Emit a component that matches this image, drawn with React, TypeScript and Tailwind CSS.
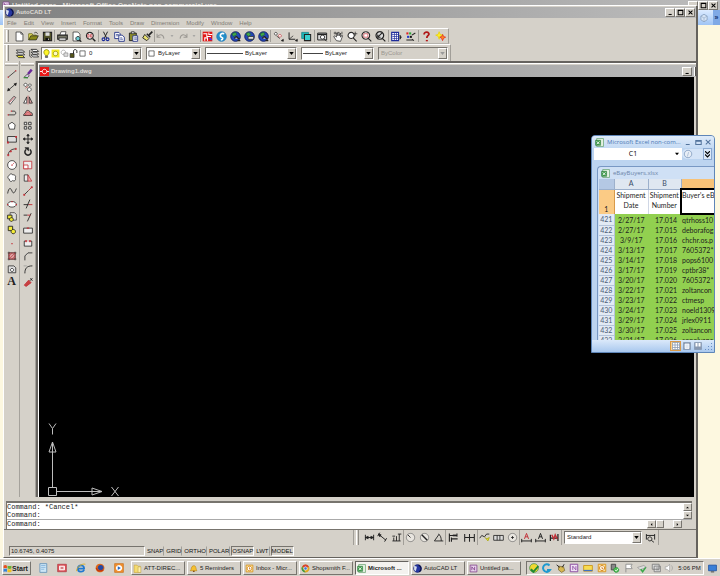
import React from "react";

type Stroke = [d: string, stroke?: string, fill?: string, width?: number];

const K = "#222222";
const R = "#c23038";
const N = "none";
const SHEET: Stroke = ["M3 1.5h7l3 3v10H3z", K, "#fff"];

/* Each glyph is a list of [path, stroke, fill, stroke width] on a 16 x 16 grid. */
const GLYPHS: Record<string, Stroke[]> = {
  new: [SHEET, ["M10 1.5v3h3", K]],
  open: [["M1 13V4h5l1 2h5v2", "#555500", "#e8e060"], ["M1 13l3-6h11l-3 6z", K, "#8a8a1a"], ["M9 3c2-2 4-1 5 1", K]],
  save: [["M2 2h12v12H2z", K, "#55552a", 1.5], ["M5 2h6v5H5z", N, "#ddd"], ["M5 10h6v4H5z", N, "#111"], ["M9 11h1v2H9z", N, "#fff"]],
  print: [["M4 6l2-5h7l-1 5", K, "#fff"], ["M1 6h14v6H1z", K, "#777766", 1.5], ["M3 10h10v4H3z", K, "#ccc"]],
  preview: [SHEET, ["M10 8a3 3 0 1 0 .1 0", K, "#6fd0d8", 1.3], ["M12 13l3 2.5", K, N, 2]],
  find: [["M7 2a5 5 0 1 0 .1 0", K, "#fff", 1.5], ["M11 11l4 4", K, N, 2], ["M4 5h2v4H4zM8 5h2v4H8z", R, N]],
  cut: [["M5 1l5 10M11 1L6 11", K, N, 1.4], ["M5 10a2 2 0 1 0 .1 0M11 10a2 2 0 1 0 .1 0", "#1a2a99", N, 1.6]],
  copy: [["M1 2h6l2 2v7H1z", "#223388", "#fff", 1.3], ["M7 6h5l3 3v6H7z", "#223388", "#fff", 1.3], ["M3 5h4M3 7h4M9 10h3M9 12h4", "#223388"]],
  paste: [["M2 3h10v11H2z", K, "#8a8a2a", 1.4], ["M5 1h4v3H5z", K, "#ddd"], ["M7 7h7v8H7z", "#223388", "#fff", 1.2], ["M9 10h4M9 12h4", "#223388"]],
  brush: [["M15 1l-5 5", K, N, 2.5], ["M4 5l6 6-3 3-6-4z", K, "#e8e070", 1.3], ["M7 4l5 5", K, "#fff", 2]],
  undo: [["M3 4v5h5M3 9c3-5 9-5 10 2", "#9b9893", N, 1.5]],
  redo: [["M13 4v5H8M13 9C10 4 4 4 3 11", "#9b9893", N, 1.5]],
  dot: [["M6 7h4l-2 2z", "#999", "#999"]],
  today: [["M1 1h14v14H1z", N, "#e01818"], ["M2 4h5v4h6M4 14v-4h4v4M10 2v3h5", "#fff", N, 1.5], ["M11 10l3 3", "#3a3aff", N, 2]],
  msn: [["M8 1a7 7 0 1 0 .1 0", "#1d75b8", "#238fc9"], ["M12 4C6 2 5 8 8 9c3 1 2 4-1 4", "#fff", N, 2.4]],
  globe: [["M8 1a7 7 0 1 0 .1 0", "#14205e", "#2346b8", 1.3], ["M3 4l4-2 3 3-4 3zM9 9l4-1-2 5z", "#1d6b2a", "#45a84a"], ["M6 8h8v4H6z", K, "#ddd"]],
  globe2: [["M8 1a7 7 0 1 0 .1 0", "#14205e", "#2346b8", 1.3], ["M3 4l5-2 2 3-5 3z", "#1d6b2a", "#45a84a"], ["M7 11a2 2 0 0 1 4-1l3 2M11 14h4", K, "#ccc", 2]],
  snap: [["M4 2a2 2 0 1 0 .1 0", K, "#fff"], ["M10 5a2 2 0 1 0 .1 0", R, "#fff"], ["M5 7l5 4M12 14l3 1v-3z", K, K]],
  ucs: [["M3 2v10h9", K, N, 1.4], ["M3 12l6-5M12 14l3 1v-3z", K, K]],
  block: [["M1 2h10v9H1z", "#157a80", "#1fb5b8"], ["M5 5h9v9H5z", K, "#39cfcf", 1.5]],
  aerial: [["M1 3h13v10H1z", K, "#ddd", 1.4], ["M1 5h13", K, N, 2], ["M8 6a3 3 0 1 0 .1 0M10 11l4 4", K, "#fff", 1.4]],
  pan: [["M5 14L1 8l2-1 2 2V3h2v4-5h2v5l2-4v6l2-3 1 1-3 8z", K, "#fff"], ["M1 3h4M3 1v4M13 1v4", K]],
  zoomrt: [["M6 2a4.5 4.5 0 1 0 .1 0M9 10l5 5", K, "#fff", 1.5], ["M12 1v6M10 4h5", K]],
  zoomwin: [["M7 1a5.5 5.5 0 1 0 .1 0M11 11l4 4", K, "#fff", 1.5], ["M4 4h6v5H4z", R]],
  zoomprev: [["M7 1a5.5 5.5 0 1 0 .1 0M11 11l4 4", K, "#ddd", 1.7], ["M10 3L4 9M4 5v4h4", K, N, 1.6]],
  props: [["M1 2h10v12H1z", "#1f2c9a", "#fff", 1.6], ["M1 5h10M5 2v12M8 2v12M2 8h8M2 11h8", "#1f2c9a"], ["M13 6l2 3-2 3z", K, K]],
  dbs: [["M2 2h3v3H2z", N, "#e02020"], ["M6 2h3v3H6z", N, "#2aa838"], ["M3 7h3v3H3z", N, "#2438c8"], ["M7 7h3v3H7z", N, "#111"], ["M2 13h9M10 6l5-3M10 12l3 2", K, N, 1.5]],
  help: [["M4.5 5c0-5 8-4 7 0-1 2-3 2-3 5", "#b01818", N, 2.6], ["M7 13h3v2H7z", N, "#b01818"]],
  star: [["M6 1l1.5 4L12 6 7.5 7.500 6 12 4.500 7.500 1 6l3.500-1z", "#e8d000", "#fff02a"], ["M11 5l1.500 3 3 1-3 1.500L11 14l-1.500-3.500L7 9l3-1z", "#e02020", "#ff8a20"]],
  layers: [["M2 3h9l3 3H5z", K, "#fff", 1.2], ["M2 7h9l3 3H5z", K, "#fff", 1.2], ["M2 11h9l3 3H5z", K, "#f2ea36", 1.2]],
  layers2: [["M3 2h8l3 3H6zM3 6h8l3 3H6zM3 10h8l3 3H6z", K, "#fff", 1.2], ["M1 3v9l3 2", K]],
  bulb: [["M8 1a5 5 0 0 1 2 9.500v1H6v-1A5 5 0 0 1 8 1z", "#7a7a00", "#fff62a", 1.2], ["M6 13h4v2H6z", K, "#999"]],
  sun: [["M1 1h14v14H1z", N, "#f2ea20"], ["M8 4a4 4 0 1 0 .1 0", "#7a7a00", "#fffcc0", 1.2]],
  vp: [["M6 2a4 4 0 1 0 .1 0", "#888", "#fff"], ["M7 7h7v6H7z", "#777", "#ddd"]],
  lock: [["M2 8h7v7H2z", K, "#55551a", 1.2], ["M8 8V4c0-4 6-4 6 0v3", K, N, 1.7]],
  square: [["M2 2h12v12H2z", K, "#fff", 1.4]],
  line: [["M2 13L14 3", K, N, 1.2], ["M1 12h2v2H1zM13 2h2v2h-2z", N, R]],
  xline: [["M1 14L15 2", K, N, 1.3], ["M1 14l1-4 3 3zM15 2l-1 4-3-3z", K, K]],
  mline: [["M2 12L11 2l3 2-9 11z", K, "#eee", 1.1], ["M3 13L12 3", R]],
  pline: [["M2 11h9c4 0 4-6 0-6H8", K, N, 1.3], ["M1 10h2v2H1zM6 4h2v2H6z", N, R]],
  polygon: [["M8 2l5 4-1 7H4L2 6z", K, "#fff", 1.2]],
  rect: [["M1 4h14v9H1z", K, "#ddd", 1.3], ["M0 12h3v3H0zM13 3h3v3h-3z", N, R]],
  arc: [["M2 13C2 6 8 3 14 3", K, N, 1.3], ["M1 12h2v2H1zM5 6h2v2H5zM13 2h2v2h-2z", R, R]],
  circle: [["M8 1a7 7 0 1 0 .1 0", K, "#fff", 1.2], ["M7 7h2v2H7z", N, R], ["M9 7l3-3", R]],
  cloud: [["M4 3c2-3 5-1 5 0 4-1 6 3 4 5 2 3-1 6-4 4-2 3-6 1-5-2-4-1-3-5 0-7z", K, "#fff", 1.2]],
  spline: [["M1 12C3 1 6 3 8 8s4 4 7-4", K, N, 1.3]],
  ellipse: [["M8 4c9 0 9 9 0 9s-9-9 0-9z", K, "#fff", 1.2], ["M0 8h2v2H0zM14 8h2v2h-2zM7 3h2v2H7z", N, R]],
  insert: [["M5 1h7l3 3v9H5z", K, "#ddd"], ["M1 5h7v6H1z", K, "#f2ea36", 1.4], ["M7 9a3 3 0 1 0 .1 0", K, "#f2ea36", 1.4]],
  mkblock: [["M2 2h7v7H2z", K, "#f2ea36", 1.4], ["M10 7a3.500 3.500 0 1 0 .1 0", K, "#f2ea36", 1.4]],
  point: [["M7 8h2v2H7z", N, R]],
  hatch: [["M3 3h10v10H3z", R, "#d9a0a0", 1.2], ["M1 3h14M1 13h14M3 1v14M13 1v14", K], ["M3 8l5-5M3 13L13 3M8 13l5-5", R]],
  region: [["M2 3h9l3 3v8H2z", K, "#ddd", 1.2], ["M8 7a2.500 2.500 0 1 0 .1 0", K, "#fff", 1.2]],
  erase: [["M14 1L8 8", "#6a2a9a", N, 4], ["M7 8l3 3-3 3-5-1z", K, "#d8c8e8"], ["M1 14h7", "#2a8a2a", N, 1.800]],
  copyobj: [["M4 2a2.500 2.500 0 1 0 .1 0M11 3a2 2 0 1 0 .1 0M10 9a3 3 0 1 0 .1 0", K, "#fff", 1.1], ["M4 10l4-3", R]],
  mirror: [["M6 3v10H1z", K, "#fff", 1.2], ["M10 3v10h5z", K, "#d9a0a0", 1.2], ["M8 1v14", R]],
  offset: [["M1 12c0-4 3-3 3-5s4-6 8 0c2 0 3 1 3 5z", K, "#d98a8a", 1.2], ["M4 11c0-3 2-3 4-3s4 0 4 3z", R, "#eab0b0"]],
  array: [["M2 2h4v4H2zM9 2h4v4H9zM2 9h4v4H2zM9 9h4v4H9z", K, "#eee", 1.3]],
  move: [["M8 1v14M1 8h14", K, N, 1.5], ["M8 0l2 3H6zM8 16l2-3H6zM0 8l3-2v4zM16 8l-3-2v4z", K, K]],
  rotate: [["M11 4a5 5 0 1 1-6 0", K, N, 2.4], ["M3 1h6v5z", K, K]],
  scale: [["M1 2h13v12H1z", R, "#eee", 1.3], ["M1 8h7v6H1z", R, "#fff", 1.3]],
  stretch: [["M2 3h6v10H2z", K, "#eee", 1.2], ["M8 3l6 10H8z", R, "#eab0b0", 1.2]],
  lengthen: [["M2 14L9 7", K, N, 1.3], ["M9 7l5-5", R, N, 1.500], ["M1 13h2v2H1zM13 1h2v2h-2z", R, R]],
  trim: [["M11 1L5 15M1 9h8", K, N, 1.4], ["M9 9h6", R, N, 1.500]],
  extend: [["M13 2L7 15", K, N, 1.4], ["M1 5h6", K, N, 1.4], ["M7 5h5", R, N, 1.500]],
  brk: [["M1 5h14v8H1z", K, "#eee", 1.3], ["M6 5h4", R, N, 2]],
  brk2: [["M4 5H2v8h12V5h-2", K, "#eee", 1.3], ["M4 4h2v2H4zM10 4h2v2h-2z", R, R]],
  chamfer: [["M3 15V8l5-5h7", K, N, 1.3], ["M3 8l5-5", "#666", N, 1.300]],
  fillet: [["M3 15C3 7 6 3 15 3", K, N, 1.4], ["M1 3h5", "#888"]],
  explode: [["M2 13l7-8 4 4-8 6z", R, "#c84040", 1.300], ["M11 6l4-4M12 2l3 4", K, N, 1.5]],
  dlin: [["M2 4v8M14 4v8M2 8h12", K, N, 1.4], ["M2 8l4-2v4zM14 8l-4-2v4z", K, K]],
  dali: [["M2 3l11 9M1 6l3-5M11 14l3-5", K, N, 1.4], ["M2 3l4 1-2 3z", K, K]],
  dord: [["M2 13h12M4 13V8M8 13V6M12 13V3M2 6h4M10 3h5", K, N, 1.3]],
  drad: [["M8 2a6 6 0 1 0 .1 0", "#666", "#e8e5df"], ["M8 8L4 4", K, N, 1.3]],
  ddia: [["M8 2a6 6 0 1 0 .1 0", "#666", "#e8e5df"], ["M4 4l8 8", K, N, 2]],
  dang: [["M2 13h13M2 13L9 3", K, N, 1.3], ["M8 3c3 2 4 5 4 10", K, N, 1.3]],
  qdim: [["M2 2v12M13 2v5M2 5h11M5 10h9M5 8v6", K, N, 1.6], ["M7 5h5", K, N, 2.5]],
  dcont: [["M1 3v11M8 3v11M15 3v11M1 8h14", K, N, 1.5]],
  leader: [["M1 9l3-4 4 2 3-4h4", K, N, 1.3], ["M9 8l2 2 4-2-2 5z", "#a0a000", "#f2ea36"]],
  tol: [["M1 5h14v7H1zM6 5v7M10 5v7", K, "#ddd", 1.2]],
  center: [["M8 2a6 6 0 1 0 .1 0", "#666", "#e8e5df"], ["M8 6v4M6 8h4", K, N, 1.300]],
  dimedit: [["M5 10l3-8 3 8M6 7h4", R, N, 1.4], ["M1 13h14M1 10v5M15 10v5", K, N, 1.4]],
  dimtedit: [["M5 10l3-8 3 8M6 7h4", K, N, 1.4], ["M1 13h14M1 10v5M15 10v5", K, N, 1.4]],
  dimupd: [["M2 4v9M13 3v10M2 9h11", K, N, 1.8], ["M4 4l3 6 2-6 3 6", R, N, 2]],
  dimstyle: [["M2 3v8M14 3v8M2 5h12", K, N, 1.4], ["M7 7a3 3 0 1 0 .1 0M9 12l4 3", K, N, 1.3]],
  acad: [["M8 1a7 7 0 1 0 .1 0", "#1a2270", "#2636a0"], ["M2 3l5 2-2 8-3-3z", N, "#d8e0f0"], ["M10 2c5 2 6 9 1 12", "#0a1144", N, 2]],
  dwg: [["M0 0h16v16H0z", N, "#e81818"], ["M8 4a4 4 0 1 0 .1 0M0 8h4M12 8h4", "#fff", N, 1.600]],
  excel: [["M3 1h12v14H3z", "#3c8a48", "#eaf5e8"], ["M1 4h9v9H1z", "#2c7a3a", "#3d9a4a"], ["M3 6l5 5M8 6l-5 5", "#fff", N, 1.6]],
  onenote: [["M2 2h12v12H2z", "#80408a", "#ead6ee", 1.4], ["M5 11V5l5 6V5", "#80408a", N, 1.500]],
  chrome: [["M8 1a7 7 0 1 0 .1 0", N, "#e0a820"], ["M8 1A7 7 0 0 1 14 5L8 8 2 4.500A7 7 0 0 1 8 1z", N, "#d84030"], ["M2 4.500L8 15A7 7 0 0 1 2 4.500z", N, "#3a9a48"], ["M8 5a3 3 0 1 0 .1 0", "#fff", "#3a78d8", 1.3]],
  outlook: [["M2 2h12v12H2z", "#d89018", "#fbe29a", 1.4], ["M8 4a4 4 0 1 0 .1 0M8 6v3h2", "#d07808", "#fff", 1.4]],
  folder: [["M2 2h5l2 2h4v11H2z", "#c8a030", "#f5dc70"], ["M9 5h5v10H9z", "#b8a050", "#fff0a8"]],
  bell: [["M2 12c3-2 1-8 6-9s4 6 6 9z", "#b88010", "#f5c030"], ["M7 13h3", "#804000", N, 2]],
  note: [["M3 1h11v14H3z", "#6090b8", "#cde6f6", 1.3], ["M5 4h7M5 7h7M5 10h5", "#6aa0d0"]],
  key: [["M1 2h14v12H1z", "#a83038", "#e05058"], ["M4 5h8v6H4z", "#fff", "#f8d0d0", 1.3], ["M6 8h4", "#a83038", N, 1.6]],
  ie: [["M3 9h10c0-7-10-7-10 0 0 6 8 6 10 2", "#2078d0", N, 2.8], ["M1 13C0 8 9 0 15 2", "#e0b020", N, 1.5]],
  firefox: [["M8 1a7 7 0 1 0 .1 0", N, "#e06818"], ["M9 3a4.500 4.500 0 1 0 .1 0", N, "#2848a0"], ["M2 8c2 6 8 5 11 3", "#c03810", N, 2]],
  wmp: [["M1 1h14v14H1z", "#c86810", "#f09030"], ["M8 3a5 5 0 1 0 .1 0", N, "#fff"], ["M6 5l5 3-5 3z", N, "#2868c0"]],
  flag: [["M1 3c3-2 4-1 6 0v5c-2-1-4-1-6 0z", N, "#e85020"], ["M8 3c3 1 4 1 7 0v5c-3 1-4 1-7 0z", N, "#68b030"], ["M1 9c3-1 4-1 6 0v5c-2-1-4-1-6 0z", N, "#3080d8"], ["M8 9c3 1 4 1 7 0v5c-3 1-4 1-7 0z", N, "#f0c020"]],
  tcheck: [["M8 1a7 7 0 1 0 .1 0", "#288838", "#f0d830"], ["M3 10l4 4 8-9", "#1d8a34", N, 3]],
  tsync: [["M12 4a6 6 0 1 0 1 7H8", "#1e9ad0", N, 3.2]],
  tbug: [["M4 5l8 1 2 6-5 3-5-4z", "#6a5828", "#d8b850"], ["M1 3l5 4M13 2l-3 5", K, N, 1.500]],
  tnote: [["M2 2h12v12H2z", "#8a4aa0", "#efe0f4", 1.5], ["M6 11V5l5 6V5", "#8a4aa0", N, 1.300]],
  tmail: [["M1 4h14v9H1z", "#c89010", "#f8dc50", 1.3], ["M1 12h14", "#4070c0", N, 2]],
  tplug: [["M2 2h7v9H2z", "#444", "#888", 1.4], ["M10 7a4 4 0 1 0 .1 0", "#1d8a34", "#4cc050"], ["M8 11l2 2 3-4", "#fff", N, 1.300]],
  tflag: [["M3 15V2h10l-2 3 2 4H3", "#888", "#fff", 1.3]],
  tusb: [["M1 7l10-3 4 3-10 4z", "#888", "#ddd"], ["M6 10l3 4 5-7", "#38a848", N, 2.4]],
  tnet: [["M2 2h11v8H2zM5 5h10v9H5z", "#777", "#ddd", 1.3], ["M8 8h5M8 11h5", "#777"]],
  tvol: [["M2 6h3l4-4v12l-4-4H2z", "#999", "#fff"], ["M12 4c2 3 2 5 0 8", "#999"]],
  desk: [["M1 2h14v10H1z", "#1d50a0", "#3a80d8", 1.400], ["M5 14h6", "#555", N, 2]],
  fx: [["M8 2a6 6 0 1 0 .1 0", "#8fa8c8", "#e8eef6", 1.5], ["M9 5L7 12", "#8fa8c8"]],
  pagen: [["M1 1h14v14H1z", "#8898b0", "#fff", 1.5], ["M1 6h14M1 11h14M6 1v14M11 1v14", "#8898b0", N, 1.500]],
  pagel: [["M1 1h14v14H1z", "#7486a0", "#8898b0"], ["M4 4h8v9H4z", "#fff", "#dfe8f4", 1.5]],
  pageb: [["M1 1h14v14H1z", "#7486a0", "#8898b0"], ["M3 2h4v7H3zM9 2h4v7H9z", N, "#fff"]],
  cube: [["M3 5l5-3 5 3v6l-5 3-5-3z", "#8fa6c4", "#d6e4f6", 1.500], ["M3 5l5 3 5-3M8 8v6", "#8fa6c4"]],
};

function Glyph({ name, className = "size-3" }: { name: string; className?: string }) {
  return (
    <svg viewBox="0 0 16 16" className={`${className} shrink-0`} aria-hidden="true">
      {(GLYPHS[name] ?? []).map(([d, stroke = K, fill = N, width = 1], i) => (
        <path key={i} d={d} stroke={stroke} fill={fill} strokeWidth={width} />
      ))}
    </svg>
  );
}

const RAISED = "border border-t-white border-l-white border-r-[#77746e] border-b-[#77746e] bg-[#d5d1c9]";
const SUNKEN = "border border-t-[#77746e] border-l-[#77746e] border-r-white border-b-white";

function Tool({ name }: { name: string }) {
  return (
    <button type="button" aria-label={name} className="flex min-w-0 flex-1 items-center justify-center">
      <Glyph name={name} className={name === "dot" ? "size-2" : "size-[11px]"} />
    </button>
  );
}

function Group({ items, width }: { items: string[]; width: string }) {
  return (
    <div className={`${width} flex shrink-0 border-r border-[#a19e98]`}>
      {items.map((n, i) => <Tool key={i} name={n} />)}
    </div>
  );
}

function Grip() {
  return <div className="mr-1 w-[3px] shrink-0 self-stretch border-x border-t-0 border-l-white border-r-[#8d8a84]" />;
}

function WinButtons({ small = false }: { small?: boolean }) {
  const labels = small ? ["Minimize"] : ["Minimize", "Maximize", "Close"];
  const paths = ["M2 7h4", "M1.500 1.500h6v6h-6zM1 2h7", "M2 2l5 5M7 2L2 7"];
  return (
    <div className="flex shrink-0">
      {labels.map((l, i) => (
        <button key={l} type="button" aria-label={l} className={`${RAISED} flex h-[9px] w-[10px] items-center justify-center`}>
          <svg viewBox="0 0 9 9" className="size-[7px]"><path d={paths[i]} stroke="#000" strokeWidth="1.300" fill="none" /></svg>
        </button>
      ))}
    </div>
  );
}

function Combo({ label, value, width, icons = [], rule = "", disabled = false }: {
  label: string; value: string; width: string; icons?: string[]; rule?: string; disabled?: boolean;
}) {
  return (
    <div className={`${SUNKEN} ${width} flex h-[13px] shrink-0 items-center ${disabled ? "bg-[#d5d1c9] text-[#99958f]" : "bg-white text-[#222]"}`}>
      {icons.map((n) => <Glyph key={n} name={n} className={n === "square" ? "mx-px size-[7px]" : "size-[9px]"} />)}
      {rule && <span className={`${rule} ml-px h-px shrink-0 bg-[#444]`} />}
      <select aria-label={label} disabled={disabled} className="min-w-0 flex-1 appearance-none bg-transparent pl-[2px] leading-[9px] opacity-100">
        <option>{value}</option>
      </select>
      <span className={`${RAISED} pointer-events-none flex h-[11px] w-[9px] items-center justify-center`}>
        <svg viewBox="0 0 6 4" className="h-[3px] w-[5px]"><path d="M0 0h6L3 4z" fill={disabled ? "#999" : "#000"} /></svg>
      </span>
    </div>
  );
}

const MENUS = ["File", "Edit", "View", "Insert", "Format", "Tools", "Draw", "Dimension", "Modify", "Window", "Help"];
const DRAW = ["line", "xline", "mline", "pline", "polygon", "rect", "arc", "circle", "cloud", "spline", "ellipse", "insert", "mkblock", "point", "hatch", "region"];
const MODIFY = ["erase", "copyobj", "mirror", "offset", "array", "move", "rotate", "scale", "stretch", "lengthen", "trim", "extend", "brk", "brk2", "chamfer", "fillet", "explode"];

function SideBar({ items, text = false }: { items: string[]; text?: boolean }) {
  return (
    <div className="flex w-4 flex-col border-r border-[#a5a29c]">
      <div className="mx-px mt-[2px] mb-px h-[3px] border-y border-t-white border-b-[#a19e98]" />
      {items.map((n) => (
        <button key={n} type="button" aria-label={n} className="flex h-[13px] items-center justify-center"><Glyph name={n} className="size-[10px]" /></button>
      ))}
      {text && <button type="button" className="h-[13px] font-['Liberation_Serif',serif] text-[12px] leading-[13px] font-bold">A</button>}
    </div>
  );
}

function StandardBar() {
  return (
    <div className="flex h-4 w-[445px] border-r border-b border-r-[#a19e98] border-b-[#b5b2ac] border-t border-t-white py-px pl-[2px]">
      <Grip />
      <Group width="w-[42px]" items={["new", "open", "save"]} />
      <Group width="w-[44px]" items={["print", "preview", "find"]} />
      <Group width="w-[56px]" items={["cut", "copy", "paste", "brush"]} />
      <Group width="w-[46px]" items={["undo", "dot", "redo", "dot"]} />
      <Group width="w-[70px]" items={["today", "msn", "globe2", "globe", "globe2"]} />
      <Group width="w-[44px]" items={["snap", "ucs", "block"]} />
      <Group width="w-[16px]" items={["aerial"]} />
      <Group width="w-[58px]" items={["pan", "zoomrt", "zoomwin", "zoomprev"]} />
      <Group width="w-[30px]" items={["props", "dbs"]} />
      <div className="flex flex-1"><Tool name="help" /><Tool name="star" /></div>
    </div>
  );
}

function PropertiesBar() {
  return (
    <div className="flex h-[17px] w-[447px] items-center border-t border-r border-t-white border-r-[#a19e98] pl-[2px]">
      <Grip />
      <div className="flex w-[28px]"><Tool name="layers" /><Tool name="layers2" /></div>
      <div className="flex gap-1">
        <Combo label="Layer" value="0" width="w-[101px]" icons={["bulb", "sun", "vp", "lock", "square"]} />
        <Combo label="Color" value="ByLayer" width="w-[55px]" icons={["square"]} />
        <Combo label="Linetype" value="ByLayer" width="w-[92px]" rule="w-[36px]" />
        <Combo label="Lineweight" value="ByLayer" width="w-[73px]" rule="w-[20px]" />
        <Combo label="Plot style" value="ByColor" width="w-[70px]" disabled />
      </div>
    </div>
  );
}

function DrawingArea() {
  return (
    <div className="flex min-w-0 flex-1 flex-col border-t-2 border-l-2 border-[#66635f]">
      <div className="flex min-h-0 flex-1 flex-col border-t border-l border-white pt-px">
        <div className="flex h-3 items-center gap-[2px] bg-linear-to-r from-[#818181] to-[#bcbcbc] pl-px">
          <Glyph name="dwg" className="size-[9px]" />
          <h2 className="flex-1 text-[6px] leading-3 font-bold text-[#dedbd5]">Drawing1.dwg</h2>
          <WinButtons small />
          <span className="h-[9px] w-[2px] border-l border-white bg-[#55534f]" />
        </div>
        <div className="mr-[2px] flex min-h-0 flex-1 items-end bg-black">
          <svg viewBox="0 0 90 80" className="h-[80px] w-[90px]" fill="none" stroke="#bdbdbd">
            <path d="M9.500 70.500h8v8h-8zM13.500 70V25M18 74.500h45" />
            <path d="M13.500 25l-3.500 10h7zM13.500 27v8M63 74.500l-10-3.500v7zM53 74.500h10" />
            <path d="M10 6.500l3.500 5 3.500-5M13.500 11.500v6M72.500 70l7 9M79.500 70l-7 9" />
          </svg>
        </div>
      </div>
    </div>
  );
}

function Arrow({ d, label }: { d: string; label: string }) {
  return (
    <button type="button" aria-label={label} className={`${RAISED} flex h-2 w-[9px] items-center justify-center`}>
      <svg viewBox="0 0 4 4" className="size-[3px]"><path d={d} /></svg>
    </button>
  );
}

function CommandPanel() {
  return (
    <div className="mt-1 mr-[4px] ml-[2px] border-t-2 border-l border-[#77746e] font-['Liberation_Mono',monospace] text-[7px]">
      <div className="flex border-b border-[#aaa] bg-white">
        <pre className="flex-1 font-['Liberation_Mono',monospace] leading-[8px]">{"Command: *Cancel*\nCommand:"}</pre>
        <div><Arrow d="M0 3h4L2 1z" label="Scroll up" /><Arrow d="M0 1h4L2 3z" label="Scroll down" /></div>
      </div>
      <div className="flex h-[9px] bg-[#d5d1c9]">
        <label htmlFor="command" className="bg-white leading-[9px]">Command:</label>
        <input id="command" className="min-w-0 flex-1 bg-white leading-[9px] outline-none" />
        <div className="flex w-[45px]">
          <Arrow d="M3 0v4L1 2z" label="Scroll left" />
          <span className={`${RAISED} h-2 w-[8px]`} />
          <span className="h-2 w-[9px] bg-[#e8e5e0]" />
          <Arrow d="M1 0v4l2-2z" label="Scroll right" />
        </div>
      </div>
    </div>
  );
}

function DimensionBar() {
  return (
    <div className="flex h-4 border-t border-[#77746e]">
      <div className="mr-[2px] w-[350px] border-r border-[#a19e98]" />
      <Grip />
      <Group width="w-[41px]" items={["dlin", "dali", "dord"]} />
      <Group width="w-[42px]" items={["drad", "ddia", "dang"]} />
      <Group width="w-[32px]" items={["qdim", "dcont"]} />
      <Group width="w-[42px]" items={["leader", "tol", "center"]} />
      <Group width="w-[42px]" items={["dimedit", "dimtedit", "dimupd"]} />
      <div className="ml-[2px] flex items-center"><Combo label="Dimension style" value="Standard" width="w-[78px]" /></div>
      <div className="flex w-[17px] border-r border-[#a19e98]"><Tool name="dimstyle" /></div>
    </div>
  );
}

const MODES: [string, boolean][] = [["SNAP", false], ["GRID", false], ["ORTHO", false], ["POLAR", false], ["OSNAP", true], ["LWT", false], ["MODEL", true]];

function AutoCad() {
  return (
    <main className="absolute top-[5px] right-[22px] bottom-0 left-[3px] flex flex-col border-t border-r-2 border-b border-l border-t-white border-r-[#65625d] border-b-[#65625d] border-l-white bg-[#d5d1c9] pt-px">
      <header className="ml-px flex h-[11px] shrink-0 items-center gap-[2px] bg-linear-to-r from-[#818181] to-[#bcbcbc] pr-px">
        <Glyph name="acad" className="size-[9px]" />
        <h1 className="flex-1 font-bold text-[#dedbd5]">AutoCAD LT</h1>
        <WinButtons />
      </header>
      <nav className="flex h-[10px] shrink-0 items-center gap-[7px] pl-[3px] text-[#7f7c76]">
        {MENUS.map((m) => <button key={m} type="button" className="leading-[10px]">{m}</button>)}
      </nav>
      <StandardBar />
      <PropertiesBar />
      <div className="flex min-h-0 flex-1">
        <SideBar items={DRAW} text />
        <SideBar items={MODIFY} />
        <DrawingArea />
      </div>
      <CommandPanel />
      <DimensionBar />
      <footer className="flex h-[12px] shrink-0 items-center gap-px pl-[5px]">
        <output className={`${SUNKEN} w-[136px] pl-px leading-[8px]`}>10.6745, 0.4075</output>
        {MODES.map(([m, on]) => (
          <button key={m} type="button" aria-pressed={on} className={`${on ? SUNKEN : "border border-transparent border-r-[#a19e98]"} leading-[8px] text-[#111]`}>{m}</button>
        ))}
      </footer>
    </main>
  );
}

const ROWS = [
  [421, "2/27/17", "17.014", "qtrhoss10"], [422, "2/27/17", "17.015", "deborafog"], [423, "3/9/17", "17.016", "chchr.os.p"],
  [424, "3/13/17", "17.017", "7605372*"], [425, "3/14/17", "17.018", "pops6100"], [426, "3/17/17", "17.019", "cptbr38*"],
  [427, "3/20/17", "17.020", "7605372*"], [428, "3/22/17", "17.021", "zoltancon"], [429, "3/23/17", "17.022", "ctmesp"],
  [430, "3/24/17", "17.023", "noeld1309"], [431, "3/29/17", "17.024", "jrlex0911"], [432, "3/30/17", "17.025", "zoltancon"],
  [433, "3/31/17", "17.026", "copolyana"],
];

function Excel() {
  return (
    <section className="absolute top-[135px] right-[5px] flex h-[218px] w-[124px] flex-col overflow-hidden rounded-t-[4px] border border-[#5f86b8] bg-[#bcd4f0] font-['Open_Sans','Noto_Sans',sans-serif]">
      <header className="flex h-3 shrink-0 items-center gap-[3px] bg-linear-to-b from-[#dfebf9] to-[#c4daf4] pr-[2px] pl-[3px] text-[#4a78b4]">
        <Glyph name="excel" className="size-[9px]" />
        <h2 className="flex-1 whitespace-nowrap">Microsoft Excel non-com...</h2>
        {["M1 7h5", "M1 2h7v5H1zM1 3h7", "M1 1l6 6M7 1L1 7"].map((d, i) => (
          <button key={i} type="button" aria-label={["Minimize", "Restore", "Close"][i]} className="flex w-[7px] justify-center">
            <svg viewBox="0 0 9 9" className="size-[7px]"><path d={d} stroke="#52739c" fill="none" strokeWidth="1.300" /></svg>
          </button>
        ))}
      </header>
      <div className="flex h-3 shrink-0 items-center px-[2px]">
        <input aria-label="Name box" defaultValue="C1" className="h-3 w-[78px] min-w-0 bg-white text-center text-[7px] leading-3 text-black" />
        <svg viewBox="0 0 6 4" className="h-3 w-[10px] bg-white px-[3px]"><path d="M0 0h6L3 4z" /></svg>
        <div className="flex flex-1 items-center rounded-l-full bg-[#d5e4f7] pl-px"><Glyph name="fx" className="size-[10px]" /></div>
        <button type="button" aria-label="Expand formula bar" className="flex h-3 w-[9px] items-center justify-center border border-[#8aa8d0] bg-[#dbe8f8]">
          <svg viewBox="0 0 6 8" className="h-[7px] w-[5px]"><path d="M0 0l3 3 3-3M0 4l3 3 3-3" stroke="#000" strokeWidth="1.400" fill="none" /></svg>
        </button>
      </div>
      <div className="mt-[6px] ml-[5px] flex min-h-0 flex-1 flex-col overflow-hidden rounded-tl-[4px] border-t border-l border-[#7898c4] bg-[#cfe0f5] pl-px">
        <div className="flex h-3 shrink-0 items-center gap-[3px] pl-[2px] text-[#6a84a8]"><Glyph name="excel" className="size-[9px]" />eBayBuyers.xlsx</div>
        <div className="min-h-0 flex-1 overflow-hidden">
          <table className="w-full table-fixed border-collapse text-center font-['Lato','Open_Sans',sans-serif] text-[7px] text-[#1d1d1d]">
            <colgroup><col className="w-[15px]" /><col className="w-[34px]" /><col className="w-[33px]" /><col /></colgroup>
            <thead>
              <tr className="h-[10px] bg-[#dfe7f1] leading-[9px] text-[#3b4c66]">
                <th className="border-r border-b border-[#9cb0cc] bg-[#b4c8e4] p-0" aria-label="Select all" />
                <th className="border-r border-b border-[#9cb0cc] p-0 font-normal">A</th>
                <th className="border-r border-b border-[#9cb0cc] p-0 font-normal">B</th>
                <th className="border-b border-[#d89a4a] bg-[#f8c277] p-0" aria-label="C" />
              </tr>
            </thead>
            <tbody>
              <tr className="h-[25px] bg-white leading-[10px]">
                <th className="border-r border-[#d89a4a] bg-[#fbcb85] p-0 align-bottom font-normal">1</th>
                <td className="border-r border-[#d0d7e5] p-0 align-top">Shipment Date</td>
                <td className="p-0 align-top">Shipment Number</td>
                <td className="border-y-2 border-l-2 border-black p-0 text-left align-top whitespace-nowrap">Buyer's eB</td>
              </tr>
              {ROWS.map(([n, date, num, buyer]) => (
                <tr key={n} className="h-[10px] bg-[#92d050] leading-[10px]">
                  <th className="border-r border-b border-[#b5c4da] bg-[#e2eaf4] p-0 leading-[9px] font-normal text-[#4a5c78]">{n}</th>
                  <td className="p-0">{date}</td>
                  <td className="p-0 pr-1 text-right">{num}</td>
                  <td className="p-0 pl-px text-left whitespace-nowrap">{buyer}</td>
                </tr>
              ))}
            </tbody>
          </table>
        </div>
      </div>
      <footer className="flex h-[12px] shrink-0 items-center justify-end gap-px bg-linear-to-b from-[#dbe9fa] to-[#a9c8ee] pr-px">
        <span className="flex h-[10px] w-[11px] items-center justify-center border border-[#d89a4a] bg-[#fbd390]"><Glyph name="pagen" className="size-[8px]" /></span>
        <span className="flex w-[10px] justify-center"><Glyph name="pagel" className="size-[8px]" /></span>
        <span className="flex w-[10px] justify-center"><Glyph name="pageb" className="size-[8px]" /></span>
        <svg viewBox="0 0 9 9" className="size-[9px]" fill="#6a8fc4"><path d="M7 1h1v1H7zM7 4h1v1H7zM4 4h1v1H4zM7 7h1v1H7zM4 7h1v1H4zM1 7h1v1H1z" /></svg>
      </footer>
    </section>
  );
}

const TASKS: [string, string][] = [
  ["folder", "ATT-DIREC..."], ["bell", "5 Reminders"], ["outlook", "Inbox - Micr..."], ["chrome", "Shopsmith F..."],
  ["excel", "Microsoft ..."], ["acad", "AutoCAD LT"], ["onenote", "Untitled pa..."],
];
const TRAY = ["tcheck", "tsync", "tbug", "tnote", "tmail", "outlook", "tplug", "tflag", "tusb", "tnet", "tvol"];

function TaskBar() {
  return (
    <footer className="relative flex h-[18px] shrink-0 items-center border-t border-white bg-[#d5d1c9] pt-px pl-[2px]">
      <button type="button" className={`${RAISED} flex h-[14px] w-[29px] shrink-0 items-center text-[7px] font-bold`}>
        <Glyph name="flag" className="size-[9px]" />Start
      </button>
      <div className="mx-[2px] flex w-[96px] shrink-0">
        {["note", "key", "ie", "firefox", "wmp"].map((n) => (
          <button key={n} type="button" aria-label={n} className="flex flex-1 justify-center"><Glyph name={n} className="size-[10px]" /></button>
        ))}
      </div>
      <div className="flex min-w-0 flex-1 gap-[2px]">
        {TASKS.map(([icon, label]) => {
          const active = icon === "excel";
          return (
            <button key={label} type="button" className={`${active ? "border border-t-[#66635f] border-l-[#66635f] border-r-white border-b-white bg-[#f4f2ef] font-bold" : RAISED} flex h-[14px] w-[54px] items-center gap-[2px] overflow-hidden pl-px whitespace-nowrap`}>
              <Glyph name={icon} className="size-[9px]" />{label}
            </button>
          );
        })}
      </div>
      <div className={`${SUNKEN} flex h-[14px] w-[178px] shrink-0 items-center`}>
        <div className="flex w-[149px]">
          {TRAY.map((n) => <span key={n} className="flex flex-1 justify-center"><Glyph name={n} className="size-[10px]" /></span>)}
        </div>
        <time className="flex-1 text-center whitespace-nowrap">5:06 PM</time>
      </div>
      <button type="button" aria-label="Show desktop" className="flex w-4 shrink-0 justify-center"><Glyph name="desk" className="size-[9px]" /></button>
    </footer>
  );
}

export default function App() {
  return (
    <div className="flex h-screen w-full flex-col overflow-hidden bg-[#fdf8e0] font-['Liberation_Sans',Arial,sans-serif] text-[6px] leading-[9px] text-[#222]">
      <div className="relative min-h-0 flex-1 overflow-hidden">
        <div className="flex h-[10px] items-center gap-[2px] bg-linear-to-r from-[#818181] to-[#bcbcbc] pr-[2px] pl-[2px]">
          <Glyph name="onenote" className="size-[8px]" />
          <h2 className="flex-1 text-[7px] font-bold text-[#dedbd5]">Untitled page - Microsoft Office OneNote non-commercial use</h2>
          <WinButtons />
        </div>
        <div className="flex h-[15px] items-center justify-end bg-linear-to-b from-[#dcebff] to-[#9fc4f5]">
          <Glyph name="cube" className="mr-1 size-[10px]" />
          <button type="button" aria-label="Toolbar options" className="flex h-full w-[7px] items-center justify-center bg-[#7fa9e6] text-[7px] font-bold text-[#10306a]">»</button>
        </div>
        <AutoCad />
        <Excel />
      </div>
      <TaskBar />
    </div>
  );
}
